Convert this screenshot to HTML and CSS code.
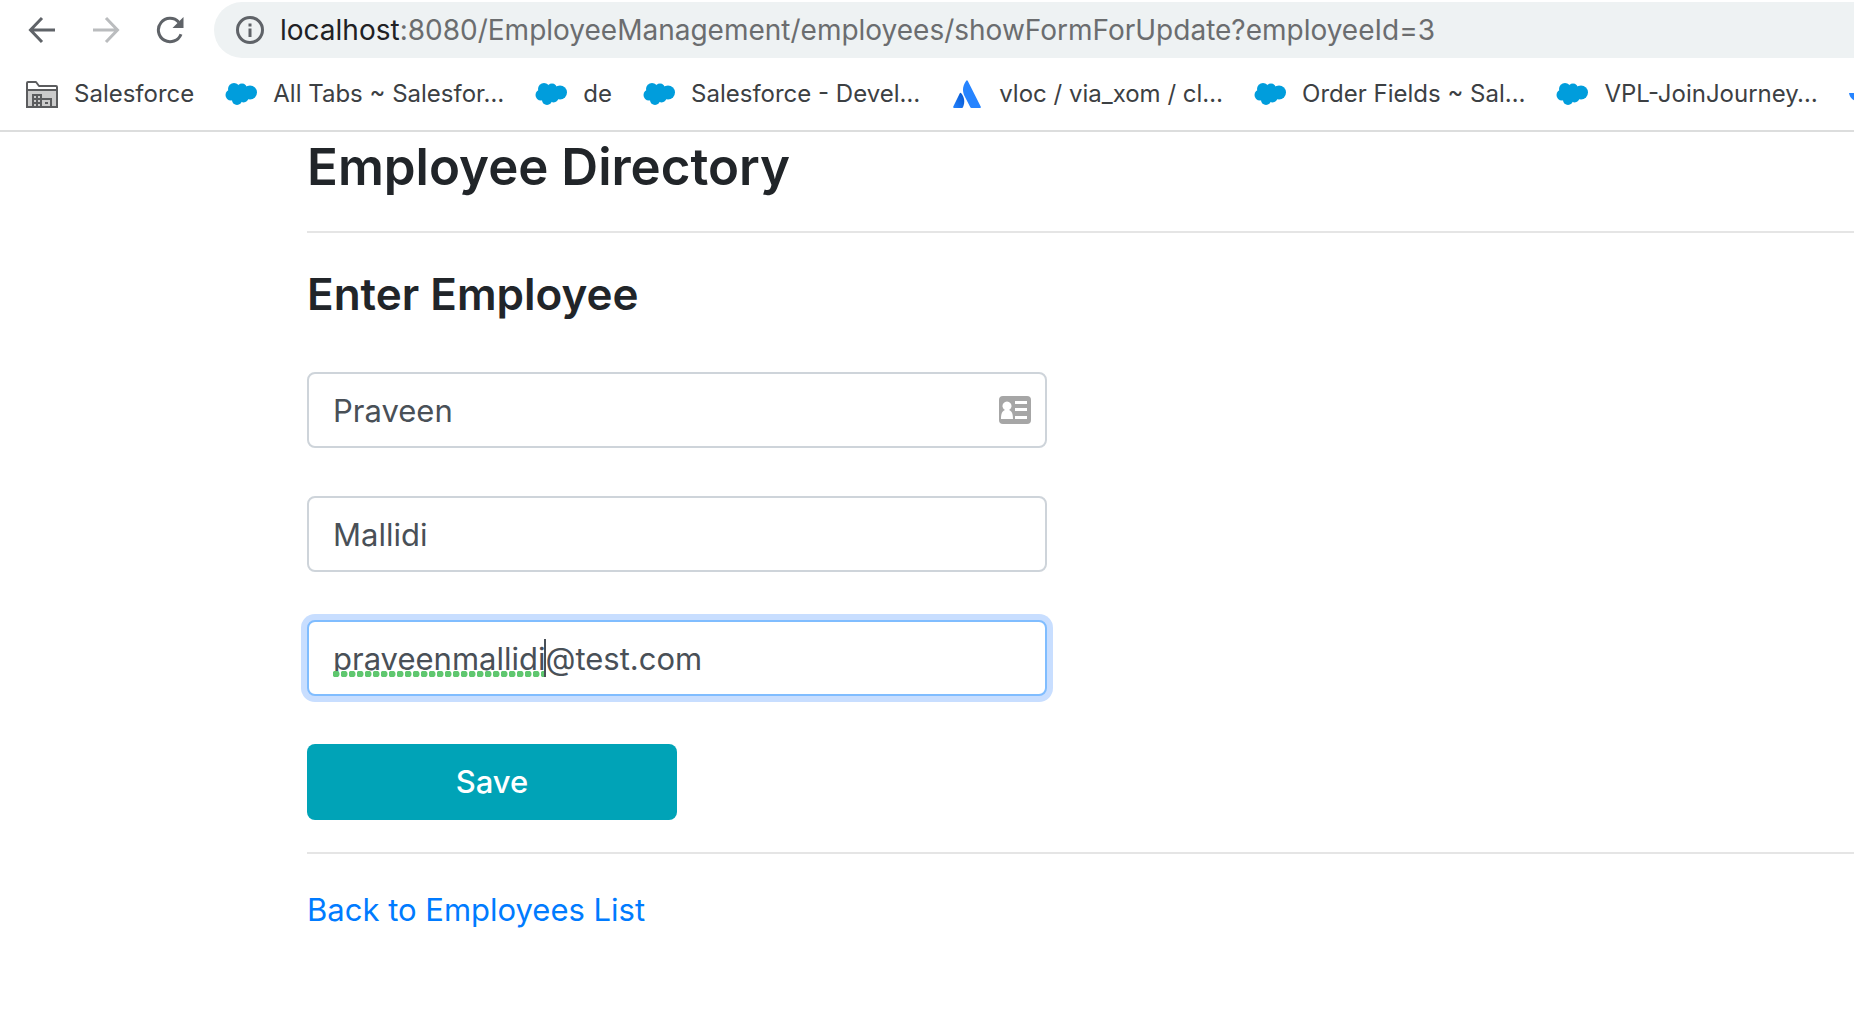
FILE: index.html
```html
<!DOCTYPE html>
<html lang="en">
<head>
<meta charset="utf-8">
<meta name="viewport" content="width=device-width, initial-scale=1">
<title>Save Employee</title>
<link rel="stylesheet" href="styles.css">
</head>
<body>
<svg class="defs" aria-hidden="true">
  <symbol id="cloud" viewBox="0 0 32 24">
    <g fill="#009ddc"><circle cx="9" cy="7" r="6"/><circle cx="17" cy="6.500" r="5"/><circle cx="25" cy="10.500" r="7"/><circle cx="6" cy="13" r="5.500"/><circle cx="12" cy="18" r="5"/><circle cx="18.500" cy="15.500" r="5"/><path d="M6 8h18v7H6z"/></g>
  </symbol>
</svg>
<header class="browser">
  <div class="toolbar">
    <button class="nav" type="button" aria-label="Back">
      <svg viewBox="0 0 28 28"><path d="M27 14H3M14 2 2.500 14 14 26"/></svg>
    </button>
    <button class="nav nav-off" type="button" aria-label="Forward" disabled>
      <svg viewBox="0 0 28 28"><path d="M1 14h24M14 2l11.500 12L14 26"/></svg>
    </button>
    <button class="nav" type="button" aria-label="Reload">
      <svg viewBox="0 0 28 28"><path d="M25 18.200A11.700 11.700 0 1 1 22.800 6.200"/><path class="solid" d="M27.500 1v11h-11z"/></svg>
    </button>
    <div class="omnibox">
      <svg class="info" viewBox="0 0 28 28" aria-hidden="true"><circle cx="14" cy="14" r="12.500"/><path d="M14 12.500V21M14 7.500v3"/></svg>
      <span class="url"><span class="host">localhost</span>:8080/EmployeeManagement/employees/showFormForUpdate?employeeId=3</span>
    </div>
  </div>
  <nav class="bookmarks" aria-label="Bookmarks">
    <a class="bookmark" href="#"><svg class="favicon" viewBox="0 0 32 28" aria-hidden="true"><path fill="#fff" stroke="#5b5c5e" stroke-width="2" stroke-linejoin="round" d="M1 26V3q0-1 1-1h8l3 4h17q1 0 1 1v19q0 1-1 1H2q-1 0-1-1z"/><path fill="#cbcbcb" stroke="#5b5c5e" stroke-width="2" d="M1 10h30v17H1z"/><path fill="#5b5c5e" d="M6 14h10v4h10v9h-2v-7h-8v7H6z"/><path fill="#cbcbcb" d="M8 16h2v2H8zm4 0h2v2h-2zm-4 4h2v2H8zm4 0h2v2h-2zm-4 4h2v2H8zm4 0h2v2h-2z"/><path fill="#5b5c5e" d="M19 22h3v2h-3z"/></svg><span>Salesforce</span></a>
    <a class="bookmark" href="#"><svg class="favicon" aria-hidden="true"><use href="#cloud"/></svg><span>All Tabs ~ Salesfor…</span></a>
    <a class="bookmark" href="#"><svg class="favicon" aria-hidden="true"><use href="#cloud"/></svg><span>de</span></a>
    <a class="bookmark" href="#"><svg class="favicon" aria-hidden="true"><use href="#cloud"/></svg><span>Salesforce - Devel…</span></a>
    <a class="bookmark" href="#"><svg class="favicon" viewBox="0 0 32 28" aria-hidden="true"><defs><linearGradient id="peak" x1="1" y1="0" x2="0" y2="1"><stop offset="0" stop-color="#0052cc"/><stop offset="1" stop-color="#2684ff"/></linearGradient></defs><path fill="url(#peak)" d="M10 13c3.500 4 4.300 9 2 14.300q-.4.700-1 .7H3q-1.200-.2-.8-1.200l6.600-13.500q.5-.9 1.200-.3z"/><path fill="#2684ff" d="M15.200.7q.8-1.100 1.500 0L29.800 26.800q.4 1-.8 1.200h-8.500q-.8 0-1.200-.8L13 15C11 10 12 5 15.200.7z"/></svg><span>vloc / via_xom / cl…</span></a>
    <a class="bookmark" href="#"><svg class="favicon" aria-hidden="true"><use href="#cloud"/></svg><span>Order Fields ~ Sal…</span></a>
    <a class="bookmark" href="#"><svg class="favicon" aria-hidden="true"><use href="#cloud"/></svg><span>VPL-JoinJourney…</span></a>
    <a class="bookmark" href="#" aria-label="More"><svg class="favicon" viewBox="0 0 32 28" aria-hidden="true"><path fill="#2684ff" d="M0 13h16v15q-2-6-8-7Q1 20 0 13z"/></svg></a>
  </nav>
</header>
<main class="page">
  <h1>Employee Directory</h1>
  <hr>
  <h2>Enter Employee</h2>
  <form class="form">
    <div class="field">
      <input type="text" aria-label="First name" value="Praveen">
      <svg class="card" viewBox="0 0 32 28" aria-hidden="true"><rect width="32" height="28" rx="4" fill="#a6a6a6"/><path fill="#fff" d="M2 23c0-5 1-8 4-9a4.500 4.500 0 1 1 4 0c3 1 4 4 4 9zM16 5h12v3H16zm0 7h12v3H16zm0 8h12v3H16z"/></svg>
    </div>
    <div class="field">
      <input type="text" aria-label="Last name" value="Mallidi">
    </div>
    <div class="field">
      <input class="active" type="text" aria-label="Email" value="praveenmallidi@test.com" spellcheck="false">
      <span class="spelling" aria-hidden="true"></span>
    </div>
    <button class="save" type="submit">Save</button>
  </form>
  <hr>
  <a class="back" href="#">Back to Employees List</a>
</main>
</body>
</html>
```
FILE: styles.css
```css
* { box-sizing: border-box; }
body {
  margin: 0;
  background: #fff;
  color: #212529;
  font: 31px/48px Inter, "Liberation Sans", sans-serif;
  overflow-x: hidden;
}
.defs { position: absolute; width: 0; height: 0; }
.browser { border-bottom: 2px solid #dcdddd; }
.toolbar {
  display: flex;
  align-items: center;
  gap: 36px;
  padding: 2px 0 0 28px;
}
.nav {
  width: 28px;
  height: 28px;
  padding: 0;
  border: 0;
  background: none;
  color: #5f6368;
}
.nav-off { color: #babcbe; }
.nav svg { display: block; fill: none; stroke: currentColor; stroke-width: 3; }
.nav .solid { fill: currentColor; stroke: none; }
.omnibox {
  flex: 1;
  display: flex;
  align-items: center;
  gap: 16px;
  height: 56px;
  margin-left: -6px;
  padding-left: 22px;
  border-radius: 28px 0 0 28px;
  background: #eef2f3;
}
.info { flex: none; width: 28px; height: 28px; fill: none; stroke: #5f6368; stroke-width: 3; }
.url { color: #6b6d6f; font-size: 28px; white-space: nowrap; }
.host { color: #202124; }
.bookmarks {
  display: flex;
  gap: 31px;
  padding: 12px 0 12px 26px;
  overflow: hidden;
}
.bookmark {
  flex: none;
  display: flex;
  align-items: center;
  gap: 16px;
  color: #3c4043;
  font-size: 24px;
  white-space: nowrap;
  text-decoration: none;
}
.favicon { width: 32px; height: 28px; }
.page { padding: 0 0 48px 307px; }
h1, h2 { margin: 0; font-weight: 600; }
h1 { padding-top: 2px; font-size: 51px; line-height: 65px; }
h2 { margin-bottom: 48px; font-size: 44px; line-height: 59px; }
hr { margin: 32px 0; border: 0; border-top: 2px solid #e5e5e5; }
.form { width: 740px; max-width: 100%; }
.field { position: relative; margin-bottom: 48px; }
.field input {
  display: block;
  width: 100%;
  height: 76px;
  padding: 0 24px;
  border: 2px solid #ced4da;
  border-radius: 8px;
  background: #fff;
  color: #495057;
  font: inherit;
  outline: 0;
}
.field .active { border-color: #80bdff; box-shadow: 0 0 0 6px #c8deff; }
.card { position: absolute; top: 24px; right: 16px; width: 32px; height: 28px; }
.spelling {
  position: absolute;
  top: 19px;
  left: 26px;
  width: 213px;
  height: 38px;
  border-right: 2px solid #495057;
  background: radial-gradient(circle at 3px 3px, #5fc76f 3px, transparent 4px) 0 100% / 8px 6px repeat-x;
}
.save {
  display: block;
  width: 50%;
  height: 76px;
  border: 0;
  border-radius: 8px;
  background: #00a3b7;
  color: #fff;
  font: inherit;
  font-weight: 500;
}
.back { color: #007bff; text-decoration: none; }
```
